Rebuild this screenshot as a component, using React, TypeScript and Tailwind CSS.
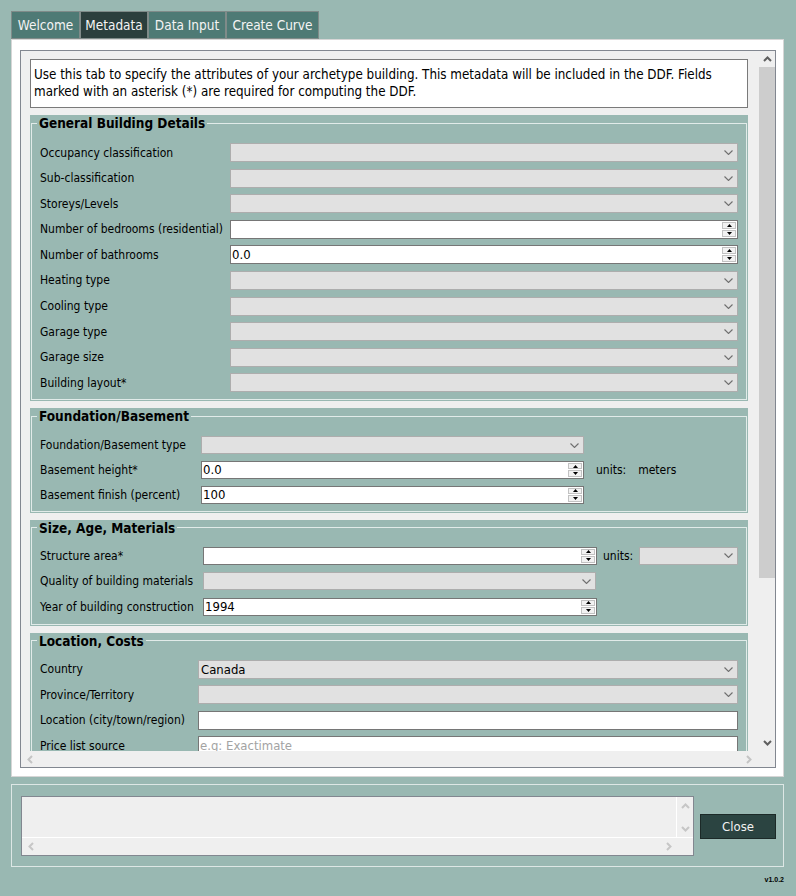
import React from "react";

function ChevronDown({ color = "#6f6f6f" }: { color?: string }) {
  return (
    <svg width="9" height="5" viewBox="0 0 9 5">
      <polyline points="0.5,0.5 4.5,4.5 8.5,0.5" fill="none" stroke={color} strokeWidth="1.1" />
    </svg>
  );
}

// thick little arrows used by the scroll bars
function Arrow({ dir, color }: { dir: "up" | "down" | "left" | "right"; color: string }) {
  const pts = {
    up: "1,5 4.5,1.5 8,5",
    down: "1,1 4.5,4.5 8,1",
    left: "5,1 1.5,4.5 5,8",
    right: "1,1 4.5,4.5 1,8",
  }[dir];
  const vertical = dir === "up" || dir === "down";
  return (
    <svg width={vertical ? 9 : 6} height={vertical ? 6 : 9} viewBox={vertical ? "0 0 9 6" : "0 0 6 9"}>
      <polyline points={pts} fill="none" stroke={color} strokeWidth="2" />
    </svg>
  );
}

function Combo({ className = "", value }: { className?: string; value?: string }) {
  return (
    <div className={`flex items-center justify-between h-full bg-[#e1e1e1] border border-[#adadad] pl-[2px] pr-[4px] ${className}`}>
      <span className="text-[13px] leading-none text-black">{value}</span>
      <ChevronDown />
    </div>
  );
}

function Spin({ className = "", value }: { className?: string; value?: string }) {
  return (
    <div className={`flex h-full bg-white border border-[#767676] ${className}`}>
      <div className="flex-1 flex items-center pl-[1px] text-[13px] leading-none text-black">{value}</div>
      <div className="flex flex-col w-[15px] h-full py-[1px] pr-[1px] gap-[1px]">
        <div className="flex-1 flex items-center justify-center bg-[#f2f2f2] border border-[#c2c2c2]">
          <svg width="5" height="3" viewBox="0 0 5 3">
            <polygon points="2.5,0 5,3 0,3" fill="#000" />
          </svg>
        </div>
        <div className="flex-1 flex items-center justify-center bg-[#f2f2f2] border border-[#c2c2c2]">
          <svg width="5" height="3" viewBox="0 0 5 3">
            <polygon points="0,0 5,0 2.5,3" fill="#000" />
          </svg>
        </div>
      </div>
    </div>
  );
}

function LineEdit({ placeholder }: { placeholder?: string }) {
  return (
    <div className="flex-1 h-full flex items-center bg-white border border-[#767676] pl-[1px] text-[13px] leading-none text-[#a3a3a3]">
      {placeholder}
    </div>
  );
}

function Group({ title, children }: { title: string; children: React.ReactNode }) {
  return (
    <div className="bg-[#99b8b2] px-[1px] pb-[1px]">
      <fieldset className="border border-[#e1ebe9] min-w-0">
        <legend className="ml-[5px] px-[2px] text-[13.5px] font-bold leading-[16px] text-black">{title}</legend>
        {children}
      </fieldset>
    </div>
  );
}

const general: [string, "combo" | "spin", string?][] = [
  ["Occupancy classification", "combo"],
  ["Sub-classification", "combo"],
  ["Storeys/Levels", "combo"],
  ["Number of bedrooms (residential)", "spin", ""],
  ["Number of bathrooms", "spin", "0.0"],
  ["Heating type", "combo"],
  ["Cooling type", "combo"],
  ["Garage type", "combo"],
  ["Garage size", "combo"],
  ["Building layout*", "combo"],
];

const tabs = [
  { name: "Welcome", w: "w-[69px]", active: false },
  { name: "Metadata", w: "w-[68px]", active: true },
  { name: "Data Input", w: "w-[78px]", active: false },
  { name: "Create Curve", w: "w-[93px]", active: false },
];

export default function App() {
  return (
    <div className="w-[796px] h-[896px] bg-[#99b8b2] p-[11px] font-['DejaVu_Sans_Condensed','DejaVu_Sans',sans-serif] text-black">
      {/* tab bar */}
      <div className="flex h-[28px]">
        {tabs.map((t) => (
          <div
            key={t.name}
            className={`${t.w} h-full flex items-center justify-center pt-[1px] border border-[#7f8b89] text-[13.5px] text-[#f4f4f4] ${
              t.active ? "bg-[#2b3f3d]" : "bg-[#4e7a75]"
            }`}
          >
            {t.name}
          </div>
        ))}
      </div>

      {/* tab pane */}
      <div className="w-[773px] h-[738px] bg-white border border-[#d6d6d6] pt-[10px] pl-[8px] pr-[7px] pb-[8px]">
        <div className="h-full flex flex-col border border-[#828790] bg-[#efefef]">
          <div className="flex h-[700px]">
            {/* viewport */}
            <div className="flex-1 overflow-hidden px-[9px] pt-[8px] flex flex-col gap-[7px]">
              <div className="h-[49px] shrink-0 bg-white border border-[#7a7a7a] px-[3px] py-[6px] text-[13.3px] leading-[17px]">
                Use this tab to specify the attributes of your archetype building. This metadata will be included in the DDF. Fields
                <br />
                marked with an asterisk (*) are required for computing the DDF.
              </div>

              <Group title="General Building Details">
                <div className="px-[8px] pt-[12px] pb-[7px] flex flex-col gap-[6.6px]">
                  {general.map(([label, kind, value]) => (
                    <div key={label} className="flex items-center h-[19px]">
                      <div className="w-[190px] text-[12px] leading-none">{label}</div>
                      {kind === "combo" ? <Combo className="flex-1" /> : <Spin className="flex-1" value={value} />}
                    </div>
                  ))}
                </div>
              </Group>

              <Group title="Foundation/Basement">
                <div className="px-[8px] pt-[12px] pb-[7px] flex flex-col gap-[6.6px]">
                  <div className="flex items-center h-[18px]">
                    <div className="w-[161px] text-[12px] leading-none">Foundation/Basement type</div>
                    <Combo className="w-[383px]" />
                  </div>
                  <div className="flex items-center h-[18px]">
                    <div className="w-[161px] text-[12px] leading-none">Basement height*</div>
                    <Spin className="w-[383px]" value="0.0" />
                    <span className="ml-[12px] text-[12px] leading-none">units:</span>
                    <span className="ml-[12px] text-[12px] leading-none">meters</span>
                  </div>
                  <div className="flex items-center h-[18px]">
                    <div className="w-[161px] text-[12px] leading-none">Basement finish (percent)</div>
                    <Spin className="w-[383px]" value="100" />
                  </div>
                </div>
              </Group>

              <Group title="Size, Age, Materials">
                <div className="px-[8px] pt-[11px] pb-[8px] flex flex-col gap-[7.5px]">
                  <div className="flex items-center h-[18px]">
                    <div className="w-[163px] text-[12px] leading-none">Structure area*</div>
                    <Spin className="w-[394px]" value="" />
                    <span className="ml-[6px] text-[12px] leading-none">units:</span>
                    <Combo className="ml-[6px] flex-1" />
                  </div>
                  <div className="flex items-center h-[18px]">
                    <div className="w-[163px] text-[12px] leading-none">Quality of building materials</div>
                    <Combo className="w-[393px]" />
                  </div>
                  <div className="flex items-center h-[18px]">
                    <div className="w-[163px] text-[12px] leading-none">Year of building construction</div>
                    <Spin className="w-[394px]" value="1994" />
                  </div>
                </div>
              </Group>

              <Group title="Location, Costs">
                <div className="px-[8px] pt-[11px] pb-[7px] flex flex-col gap-[6.6px]">
                  <div className="flex items-center h-[19px]">
                    <div className="w-[158px] text-[12px] leading-none">Country</div>
                    <Combo className="flex-1" value="Canada" />
                  </div>
                  <div className="flex items-center h-[19px]">
                    <div className="w-[158px] text-[12px] leading-none">Province/Territory</div>
                    <Combo className="flex-1" />
                  </div>
                  <div className="flex items-center h-[19px]">
                    <div className="w-[158px] text-[12px] leading-none">Location (city/town/region)</div>
                    <LineEdit />
                  </div>
                  <div className="flex items-center h-[19px]">
                    <div className="w-[158px] text-[12px] leading-none">Price list source</div>
                    <LineEdit placeholder="e.g: Exactimate" />
                  </div>
                </div>
              </Group>
            </div>

            {/* vertical scroll bar */}
            <div className="w-[18px] flex flex-col bg-[#efefef]">
              <div className="h-[16px] flex items-center justify-center pl-[2px]">
                <Arrow dir="up" color="#5f5f5f" />
              </div>
              <div className="h-[511px] ml-[2px] bg-[#cdcdcd]" />
              <div className="flex-1" />
              <div className="h-[16px] flex items-center justify-center pl-[2px]">
                <Arrow dir="down" color="#5f5f5f" />
              </div>
            </div>
          </div>

          {/* horizontal scroll bar */}
          <div className="flex h-[16px]">
            <div className="flex-1 flex items-center justify-between pl-[6px] pr-[5px]">
              <Arrow dir="left" color="#c4c4c4" />
              <Arrow dir="right" color="#c4c4c4" />
            </div>
            <div className="w-[18px]" />
          </div>
        </div>
      </div>

      {/* log panel */}
      <div className="mt-[7px] w-[773px] h-[83px] border border-[#dde7e5] pl-[9px] pt-[11px] flex items-start">
        <div className="w-[673px] h-[60px] border border-[#828790] bg-[#efefef] flex flex-col">
          <div className="flex h-[41px] border-b border-white">
            <div className="flex-1" />
            <div className="w-[17px] border-l border-white flex flex-col items-center justify-center gap-[17px]">
              <Arrow dir="up" color="#c6c6c6" />
              <Arrow dir="down" color="#c6c6c6" />
            </div>
          </div>
          <div className="flex-1 flex items-center justify-between pl-[6px] pr-[21px]">
            <Arrow dir="left" color="#c6c6c6" />
            <Arrow dir="right" color="#c6c6c6" />
          </div>
        </div>
        <div className="ml-[6px] mt-[18px] w-[76px] h-[25px] flex items-center justify-center bg-[#2b4441] border border-[#1c2a28] text-[13px] text-[#f2f2f2]">
          Close
        </div>
      </div>

      <div className="w-[773px] mt-[9px] text-right font-['Liberation_Sans',sans-serif] font-bold text-[7px] leading-[8px]">
        v1.0.2
      </div>
    </div>
  );
}
